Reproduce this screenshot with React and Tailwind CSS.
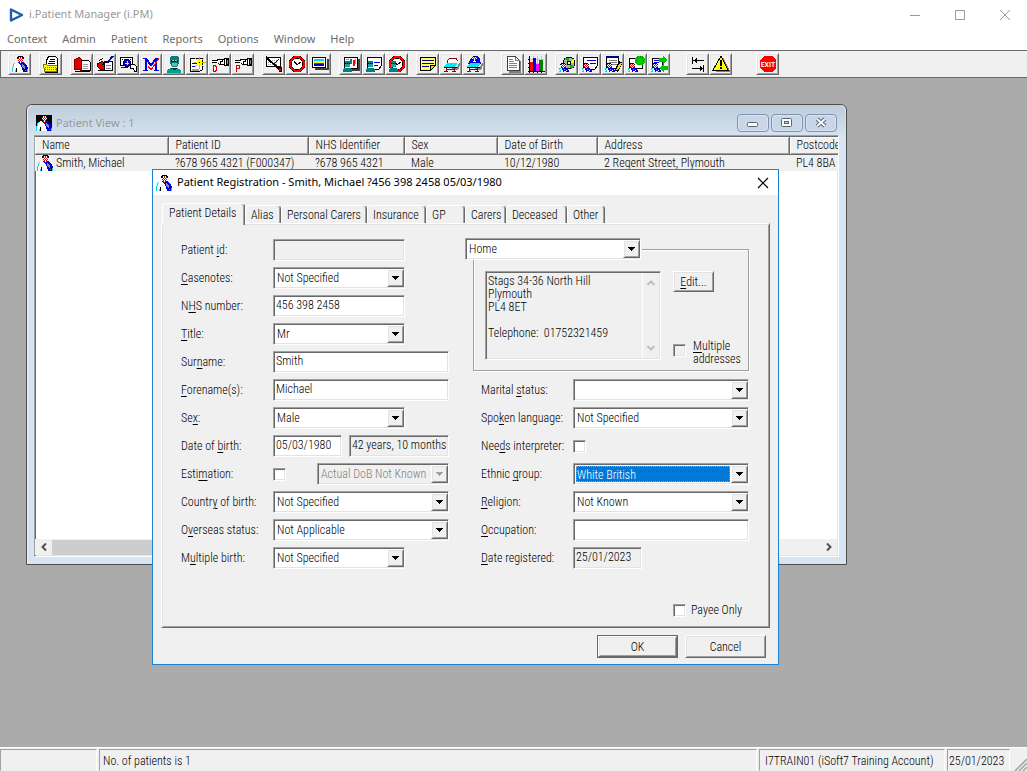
import { useState } from 'react';

const sunken = 'border border-t-[#a0a0a0] border-l-[#a0a0a0] border-r-white border-b-white shadow-[inset_1px_1px_#696969,inset_-1px_-1px_#e3e3e3]';
const raised = 'border border-t-white border-l-white border-r-[#696969] border-b-[#696969] bg-[#f0f0f0] shadow-[inset_1px_1px_#e3e3e3,inset_-1px_-1px_#a0a0a0]';

const PIXEL_COLORS = { k: '#000', r: '#e00000', w: '#fff', b: '#0000e0', c: '#00d8f0', g: '#909090' };

const PATIENT = [
  '......kkkkk.....',
  '.....kkwrwkk....',
  '.....krwrwrk....',
  '......wrwrw.....',
  '......rwrwr.....',
  '.......rwr......',
  '....wwbrwrbb....',
  '..cwwwwbrbbbb...',
  '.cwwwwwwbbgbbb..',
  '.cwwwwwwwbggbbb.',
  '.cwwwwwwwbgggbb.',
  'cwwwwwwwwwbggbbb',
  'cwwwkwwwwwbbgkbb',
  'cwwwkwwwwwbbbkbc',
  'cwwckwwwwwwbkgbc',
  'cwwckwwwwwwbbkbc',
];

const SMALL_PATIENT = [
  '..kkkk.....',
  '.krwrwk....',
  '..wrwrw....',
  '..rwrwr....',
  '..brwbb....',
  'ccwbbbbb...',
  'cwwbbgbbb..',
  'wcwwbbbwbb.',
  'ccwwb..bbb.',
];

const Pixels = ({ rows, x = 0, y = 0 }) => rows.map((row, j) =>
  [...row].map((ch, i) => ch !== '.' && (
    <rect key={`${i}-${j}`} x={x + i} y={y + j} width="1" height="1" fill={PIXEL_COLORS[ch]} />
  )),
);

const PatientIcon = ({ className = '' }) => (
  <svg viewBox="0 0 16 16" shapeRendering="crispEdges" className={`size-4 shrink-0 ${className}`}>
    <Pixels rows={PATIENT} />
  </svg>
);

// little surgeon figure shared by the clinic icons
const Surgeon = () => (
  <>
    <rect x="3" y="6" width="5" height="2" fill="#008080" />
    <rect x="3" y="8" width="5" height="1" fill="#000" />
    <rect x="4" y="8" width="1" height="1" fill="#f00" />
    <rect x="6" y="8" width="1" height="1" fill="#f00" />
    <rect x="3" y="9" width="5" height="3" fill="#20a0a0" />
    <path d="M2 13h7l1 2v2H1v-2z" fill="#008080" />
  </>
);

const Clock = () => (
  <>
    <circle cx="9" cy="9" r="7" fill="#fff" stroke="#000" strokeWidth="3" />
    <circle cx="9" cy="9" r="7" fill="none" stroke="#f00" strokeWidth="2" />
    <path d="M6 6l3 4 4-3" fill="none" stroke="#000" />
    <path d="M9 3v1M9 14v1M3 9h1M14 9h1" stroke="#000" />
  </>
);

const Bed = () => (
  <>
    <path d="M5 12h10l3-5v3l-2 5h-2z" fill="#808080" />
    <path d="M5 8h9l1 1-2 3H2z" fill="#00e8f8" />
    <path d="M2.5 12.5h12M4.5 12v4M12.5 12v4M2 16.5h4M10 16.5h4M4 14.5h9" stroke="#900000" fill="none" />
    <path d="M2 12.5h13" stroke="#000" />
  </>
);

const Hand = ({ letter }) => (
  <>
    <path d="M1 5.5h6M1 7.5h5M6 4.5h7M8 9.5h5M6.5 5v1M7.5 8v1" fill="none" stroke="#000" />
    <path d="M2 6h5v1H2zM7 5h6v4H8z" fill="#fff" />
    <path d="M9 6.5h3M9.5 7v2M11.5 5v1" fill="none" stroke="#000" />
    <path d="M13 3h5v8h-5z" fill="#000" />
    <path d="M14 4h1v6h-1z" fill="#fff" />
    <path d="M16 5h1v4h-1z" fill="#808080" />
    {letter === 'D'
      ? <path d="M2.5 10.5h2l1 2v2l-1 2h-2z" fill="none" stroke="#e00000" />
      : <path d="M2.5 17v-6.5h3v3h-3" fill="none" stroke="#e00000" />}
  </>
);

const ICONS = {
  patient: <Pixels rows={PATIENT} x={1} y={1} />,
  folder: (
    <>
      <path d="M6.5 1.5h7l2 2v8h-11v-6z" fill="#fff" stroke="#000" />
      <path d="M8 4.5h5M7 6.5h6M6 8.5h7" stroke="#000" />
      <path d="M1.5 9.5h3l1 1h10l-1 6h-12z" fill="#ffff00" stroke="#808000" />
      <path d="M3 12.5h11M3 14.5h11" stroke="#908000" strokeDasharray="1 1" />
      <path d="M15.5 10v7h-13" stroke="#000" fill="none" />
    </>
  ),
  book: (
    <>
      <path d="M8.5 5.5h7l2 2v8h-9z" fill="#fff" stroke="#000" />
      <path d="M10 9.5h5M10 11.5h5M10 13.5h5" stroke="#a0a0a0" />
      <path d="M1.5 4.5l5-2 2 2v11l-2-1h-5z" fill="#e00000" stroke="#800000" />
      <path d="M2 16.5h15" stroke="#000" />
    </>
  ),
  bookPen: (
    <>
      <path d="M8.5 6.5h8v9h-8z" fill="#fff" stroke="#000" />
      <path d="M1.5 8.5l5-2 2 2v7l-4-1-3-3z" fill="#e00000" stroke="#000" />
      <path d="M10 10.5h5M10 13.5h5" stroke="#808080" />
      <path d="M17 1l-6 7" stroke="#0000c0" strokeWidth="2" />
      <path d="M12 6l-6 4M3 5.5l4-2M2 15.5h14" stroke="#000" />
    </>
  ),
  search: (
    <>
      <path d="M1.5 2.5h12v8h-12z" fill="#fff" stroke="#000" />
      <path d="M1 4.5h12" stroke="#000" strokeDasharray="1 1" />
      <circle cx="8" cy="8" r="3.5" fill="#0000e0" stroke="#000" />
      <path d="M6 8.5h4M8.5 6v4" stroke="#ffff00" />
      <path d="M11.5 9.5h4l2 2v5h-2l-1-3h-3z" fill="#fff" stroke="#000" />
      <path d="M2 12.5h7" stroke="#0000c0" />
    </>
  ),
  letterM: (
    <>
      <path d="M1 3.5h4M13 3.5h4M1 15.5h5M12 15.5h5" stroke="#0000e0" />
      <path d="M4 3v12M14 4v11M4 4l5 6 5-6" fill="none" stroke="#0000e0" strokeWidth="2" />
      <path d="M6 11l3 4 8-12" fill="none" stroke="#f00" />
    </>
  ),
  surgeon: (
    <>
      <path d="M6 1h6l2 2v5l-2 4H7L5 8V3z" fill="#008080" />
      <rect x="6" y="5" width="7" height="2" fill="#202020" />
      <path d="M7 5.5h2M10 5.5h2" stroke="#e0c0a0" />
      <rect x="7" y="8" width="5" height="3" fill="#60c0b8" />
      <path d="M2 18v-3l4-2h6l4 2v3z" fill="#00a090" />
      <path d="M6 13.5h6M8 14.5h3" stroke="#003838" />
    </>
  ),
  newCard: (
    <>
      <path d="M2.5 3.5h12v11l-3 2h-9z" fill="#fff" stroke="#000" />
      <path d="M4 14h7v2H4z" fill="#a0a0a0" />
      <path d="M4 8.5h5M4 11.5h4" stroke="#0000c0" />
      <path d="M11.5 2v12M6 7.5h12M7 3l9 9M16 3l-9 9" stroke="#c8b800" />
      <circle cx="11.5" cy="7.5" r="3" fill="#ffff00" />
      <path d="M11 7.5h1" stroke="#000" />
    </>
  ),
  handD: <Hand letter="D" />,
  handP: <Hand letter="P" />,
  cardOff: (
    <>
      <path d="M1.5 2.5h14v9h-14z" fill="#fff" stroke="#000" />
      <path d="M3 5.5h10M3 7.5h10M3 9.5h10" stroke="#a0a0a0" strokeDasharray="1 1" />
      <path d="M1 2l13 12" stroke="#000" strokeWidth="2" />
      <path d="M9 9l5-5" stroke="#000" />
      <rect x="14" y="13" width="3" height="3" fill="#c00000" />
      <path d="M13 12.5h3M16.5 12v5M14 16.5h3" stroke="#000" />
    </>
  ),
  clock: <Clock />,
  screen: (
    <>
      <path d="M4 14h13V4" stroke="#404040" strokeWidth="2" fill="none" />
      <path d="M1.5 2.5h13v10h-13z" fill="#fff" stroke="#000" />
      <rect x="3" y="4" width="10" height="2" fill="#00d8f0" />
      <rect x="3" y="6" width="10" height="2" fill="#ffff00" />
      <rect x="3" y="8" width="10" height="1" fill="#f00" />
      <rect x="3" y="9" width="10" height="2" fill="#0000e0" />
    </>
  ),
  clinicChart: (
    <>
      <path d="M5 15h12V4" stroke="#404040" strokeWidth="2" fill="none" />
      <path d="M2.5 2.5h13v11h-13z" fill="#fff" stroke="#000" />
      <rect x="4" y="4" width="3" height="1" fill="#00d8f0" />
      <rect x="8" y="4" width="2" height="5" fill="#008080" />
      <rect x="11" y="5" width="2" height="6" fill="#f00" />
      <rect x="13" y="4" width="1" height="5" fill="#00d8f0" />
      <Surgeon />
    </>
  ),
  clinicCard: (
    <>
      <path d="M2.5 2.5h14v8l-3 4h-11z" fill="#fff" stroke="#000" />
      <path d="M9 7.5h6M9 10.5h4" stroke="#0000e0" />
      <Surgeon />
    </>
  ),
  clinicClock: (
    <>
      <Clock />
      <Surgeon />
    </>
  ),
  note: (
    <>
      <path d="M1.5 2.5h15v8l-5 5h-10z" fill="#ffff60" stroke="#000" />
      <path d="M11.5 15.5v-5h5z" fill="#d8d800" stroke="#000" />
      <path d="M3 5.5h12M3 8.5h12M3 11.5h7" stroke="#000090" />
    </>
  ),
  bed: (
    <>
      <path d="M5.5 8V5.5l2-2h7l1 3" fill="#fff" stroke="#900000" />
      <Bed />
    </>
  ),
  bedPatient: (
    <>
      <path d="M3 9l3-6 2-2h4l3 3 1 5z" fill="#0000e0" />
      <Pixels rows={['.kkk.', 'rwrwr', 'wrwrw', '.rwr.', '..w..', '.www.']} x={7} y={1} />
      <Bed />
    </>
  ),
  document: (
    <>
      <path d="M5 17h11V6" stroke="#808080" strokeWidth="2" fill="none" />
      <path d="M3.5 1.5h8l4 4v10h-12z" fill="#fff" stroke="#404040" />
      <path d="M11.5 2v3.5h4M5 4.5h4M5 6.5h5M5 8.5h8M5 10.5h8M5 12.5h8" stroke="#808080" fill="none" />
    </>
  ),
  chart: (
    <>
      <path d="M6.5 1v15M10.5 1v15M14.5 1v15M2 4.5h15M2 8.5h15" stroke="#c0c0c0" />
      <rect x="3" y="7" width="3" height="9" fill="#f00" />
      <rect x="6" y="3" width="3" height="13" fill="#0000e0" />
      <rect x="9" y="9" width="3" height="7" fill="#f0f" />
      <rect x="12" y="5" width="4" height="11" fill="#008000" />
      <path d="M2.5 1v17M1 16.5h17M1 4.5h1M1 8.5h1M1 12.5h1M6.5 16v2M10.5 16v2M14.5 16v2" stroke="#000" />
    </>
  ),
  patientDisc: (
    <>
      <circle cx="11" cy="8" r="6" fill="#b0b0a0" stroke="#000" />
      <path d="M11 8L7 3h4zM11 8l5 3-3 3z" fill="#00c000" />
      <path d="M11 8l5-4v4z" fill="#ffff00" />
      <circle cx="11" cy="8" r="2" fill="#fff" stroke="#000" />
      <Pixels rows={SMALL_PATIENT} x={1} y={8} />
    </>
  ),
  patientCard: (
    <>
      <path d="M2.5 2.5h14v8l-3 4h-11z" fill="#fff" stroke="#000" />
      <path d="M6 5.5h9M9 8.5h6" stroke="#0000e0" />
      <Pixels rows={SMALL_PATIENT} x={1} y={8} />
    </>
  ),
  patientEdit: (
    <>
      <path d="M2.5 2.5h12v11h-12z" fill="#fff" stroke="#000" />
      <path d="M2 2h13" stroke="#000080" strokeWidth="2" />
      <path d="M5 5.5h8M5 7.5h8M8 9.5h5" stroke="#808080" />
      <Pixels rows={SMALL_PATIENT} x={1} y={8} />
      <path d="M17 7l-5 9" stroke="#000" strokeWidth="4" />
      <path d="M17 8l-4 7" stroke="#ffd000" strokeWidth="2" />
    </>
  ),
  patientGlobe: (
    <>
      <path d="M2.5 3.5h13v10h-13z" fill="#fff" stroke="#000" />
      <circle cx="13" cy="5.5" r="5" fill="#00c800" />
      <circle cx="13" cy="5.5" r="4" fill="none" stroke="#008000" strokeDasharray="1 2" />
      <Pixels rows={SMALL_PATIENT} x={1} y={8} />
    </>
  ),
  patientSwap: (
    <>
      <path d="M2.5 3.5h10v10h-10z" fill="#fff" stroke="#000" />
      <path d="M4 5.5h5M4 7.5h5" stroke="#0000e0" />
      <Pixels rows={SMALL_PATIENT} x={1} y={8} />
      <path d="M9 3h4V1l5 4-5 4V7H9z" fill="#00c800" />
      <path d="M18 11h-4V9l-5 4 5 4v-2h4z" fill="#00c800" />
    </>
  ),
  tabs: (
    <path d="M3.5 2v7M4 5.5h11M7.5 3v5M6.5 4v3M5.5 5v1M14.5 10v7M3 13.5h11M11.5 11v5M12.5 12v3M13.5 13v1" fill="none" stroke="#000" />
  ),
  warning: (
    <>
      <path d="M11 2l7 14-1 1H4z" fill="#808080" />
      <path d="M9 1l7 14H1z" fill="#ffff00" stroke="#000" />
      <rect x="8" y="5" width="2" height="6" fill="#000" />
      <rect x="8" y="12" width="2" height="2" fill="#000" />
    </>
  ),
  exit: (
    <>
      <path d="M6 1h7l4 4v8l-4 4H6l-5-4V5z" fill="#f00" />
      <text x="9" y="12" textAnchor="middle" fontSize="8" fontWeight="500" fill="#fff" fontFamily="Roboto Condensed, sans-serif">EXIT</text>
    </>
  ),
};

const TOOL_GROUPS = [
  { space: '', tools: ['patient'] },
  { space: 'ml-2', tools: ['folder'] },
  { space: 'ml-2', tools: ['book', 'bookPen', 'search', 'letterM', 'surgeon', 'newCard', 'handD', 'handP'] },
  { space: 'ml-2', tools: ['cardOff', 'clock', 'screen'] },
  { space: 'ml-2', tools: ['clinicChart', 'clinicCard', 'clinicClock'] },
  { space: 'ml-2', tools: ['note', 'bed', 'bedPatient'] },
  { space: 'ml-4', tools: ['document', 'chart'] },
  { space: 'ml-2', tools: ['patientDisc', 'patientCard', 'patientEdit', 'patientGlobe', 'patientSwap'] },
  { space: 'ml-4', tools: ['tabs', 'warning'] },
  { space: 'ml-6', tools: ['exit'] },
];

const Toolbar = () => (
  <div className="flex h-7 shrink-0 items-center overflow-hidden border-y border-l border-[#696969] bg-[#f0f0f0] pl-[7px]">
    {TOOL_GROUPS.map((group, i) => (
      <div key={i} className={`flex shrink-0 ${group.space}`}>
        {group.tools.map((name) => (
          <button key={name} type="button" aria-label={name} className={`flex h-[22px] w-[23px] items-center justify-center ${raised}`}>
            <svg viewBox="0 0 18 18" shapeRendering="crispEdges" className="size-[18px] shrink-0">{ICONS[name]}</svg>
          </button>
        ))}
      </div>
    ))}
  </div>
);

const TitleBar = () => (
  <header className="flex h-[29px] shrink-0 items-center bg-white pl-2 font-['Noto_Sans',sans-serif] text-[11px] font-normal text-[#999]">
    <svg viewBox="0 0 16 16" className="size-4">
      <path d="M3 2.5L14 8 3 13.5z" fill="#fff" stroke="#1d5fa6" strokeWidth="2.4" strokeLinejoin="round" />
    </svg>
    <h1 className="ml-[5px] flex-1">i.Patient Manager (i.PM)</h1>
    {[['Minimize', 'M1 6.5h10'], ['Maximize', 'M1.5 1.5h9v9h-9z'], ['Close', 'M1 1l10 10M11 1L1 11']].map(([label, d]) => (
      <button key={label} type="button" aria-label={label} className="flex h-full w-[45px] items-center justify-center">
        <svg viewBox="0 0 12 12" className="size-3"><path d={d} fill="none" stroke="#999" /></svg>
      </button>
    ))}
  </header>
);

const MenuBar = () => (
  <nav className="flex h-[21px] shrink-0 items-center gap-[15px] bg-white pl-[7px] font-['Noto_Sans',sans-serif] text-[11px] font-normal text-[#6d6d6d]">
    {['Context', 'Admin', 'Patient', 'Reports', 'Options', 'Window', 'Help'].map((m) => (
      <button key={m} type="button">{m}</button>
    ))}
  </nav>
);

const COLUMNS = [
  { title: 'Name', width: 'w-[133px]' },
  { title: 'Patient ID', width: 'w-[140px]', value: '?678 965 4321 (F000347)' },
  { title: 'NHS Identifier', width: 'w-[96px]', value: '?678 965 4321' },
  { title: 'Sex', width: 'w-[93px]', value: 'Male' },
  { title: 'Date of Birth', width: 'w-[100px]', value: '10/12/1980' },
  { title: 'Address', width: 'w-[192px]', value: '2 Regent Street, Plymouth' },
  { title: 'Postcode', width: 'w-[80px]', value: 'PL4 8BA' },
];

const childButton = 'flex h-[18px] w-8 items-center justify-center rounded-sm border border-[#8093b0] bg-[#c8d6e8] shadow-[inset_0_0_0_1px_#d8e4f2]';

const PatientView = () => (
  <section className="absolute left-[26px] top-[26px] flex h-[461px] w-[821px] flex-col rounded-t-md border border-[#4d4d4d] bg-[#d7e4f2] px-[7px] pb-[7px] shadow-[inset_1px_1px_#e8f0f8]">
    <div className="-mx-[6px] flex h-[30px] shrink-0 items-center rounded-t-md bg-linear-to-b from-[#bfcddb] to-[#d4e1ef] px-2 pt-1.5 font-['Noto_Sans',sans-serif] text-[11px] font-normal text-[#999]">
      <span className="bg-black"><PatientIcon /></span>
      <h2 className="ml-1 flex-1">Patient View : 1</h2>
      <div className="flex gap-[2px]">
        <button type="button" aria-label="Minimize" className={childButton}>
          <svg viewBox="0 0 12 12" className="size-3"><rect x="0.5" y="5.5" width="10" height="4" rx="1" fill="#fff" stroke="#5a6270" /></svg>
        </button>
        <button type="button" aria-label="Maximize" className={childButton}>
          <svg viewBox="0 0 12 12" className="size-3">
            <rect x="0.5" y="1.5" width="10" height="8" rx="1" fill="#fff" stroke="#5a6270" />
            <rect x="3.5" y="4.5" width="4" height="2" fill="#c8d6e8" stroke="#5a6270" />
          </svg>
        </button>
        <button type="button" aria-label="Close" className={childButton}>
          <svg viewBox="0 0 12 12" className="size-3">
            <path d="M2 2l8 7M10 2L2 9" stroke="#5a6270" strokeWidth="4" />
            <path d="M2 2l8 7M10 2L2 9" stroke="#fff" strokeWidth="2" />
          </svg>
        </button>
      </div>
    </div>
    <div className={`flex flex-1 flex-col overflow-hidden bg-white py-px pr-px ${sunken}`}>
      <table className="w-[834px] table-fixed border-collapse text-left leading-4">
        <thead>
          <tr>
            {COLUMNS.map((c) => (
              <th key={c.title} className={`h-[17px] border-b border-r border-[#696969] bg-[#f0f0f0] pl-[7px] font-light shadow-[inset_1px_1px_#fff,inset_-1px_-1px_#a0a0a0] ${c.width}`}>{c.title}</th>
            ))}
          </tr>
        </thead>
        <tbody>
          <tr className="bg-[#f0f0f0]">
            {COLUMNS.map((c) => (
              <td key={c.title} className="h-[17px] whitespace-nowrap pl-[7px] first:pl-0.5">
                {c.value ?? <span className="flex items-center gap-[3px]"><PatientIcon />Smith, Michael</span>}
              </td>
            ))}
          </tr>
        </tbody>
      </table>
      <div className="flex-1" />
      <div className="flex h-4 shrink-0 items-center bg-[#f0f0f0]">
        <button type="button" aria-label="Scroll left" className="flex w-[17px] justify-center">
          <svg viewBox="0 0 8 8" className="size-2"><path d="M6 0.5L2.5 4 6 7.5" fill="none" stroke="#505050" strokeWidth="2" /></svg>
        </button>
        <div className="mr-16 h-[15px] flex-1 bg-[#cdcdcd]" />
        <button type="button" aria-label="Scroll right" className="flex w-[17px] justify-center">
          <svg viewBox="0 0 8 8" className="size-2"><path d="M2 0.5L5.5 4 2 7.5" fill="none" stroke="#505050" strokeWidth="2" /></svg>
        </button>
      </div>
    </div>
  </section>
);

// label text with the accelerator letter between two underscores
const Accel = ({ text }) => {
  const [before, key, after] = text.split('_');
  return <>{before}<u className="underline underline-offset-2">{key}</u>{after}</>;
};

const Row = ({ id, label, children }) => (
  <div className="flex h-7 items-center">
    <label htmlFor={id} className="w-[92px] shrink-0 whitespace-nowrap"><Accel text={label} /></label>
    {children}
  </div>
);

const TextBox = ({ id, value = '', readOnly = false, className = 'w-44', label }) => (
  <input id={id} type="text" defaultValue={value} readOnly={readOnly} aria-label={label}
    className={`h-[22px] pb-[3px] pl-[2px] outline-none ${readOnly ? 'bg-[#f0f0f0]' : 'bg-white'} ${sunken} ${className}`} />
);

const Combo = ({ id, value = '', className = 'w-44', disabled = false, focused = false, label }) => (
  <div className={`flex h-[22px] py-px pl-px ${disabled ? 'bg-[#f0f0f0]' : 'bg-white'} ${sunken} ${className}`}>
    <select id={id} defaultValue={value} disabled={disabled} aria-label={label}
      className={`min-w-0 flex-1 appearance-none rounded-none leading-4 outline-none ${focused ? 'm-px border border-dotted border-[#ff8728] bg-[#0078d7] text-white' : 'pl-0.5'} ${disabled ? 'text-[#808080]' : ''}`}>
      <option value={value}>{value}</option>
    </select>
    <span className={`pointer-events-none flex w-[17px] shrink-0 items-center justify-center ${raised}`}>
      <svg viewBox="0 0 7 4" shapeRendering="crispEdges" className="h-1 w-[7px]">
        <path d="M0 0h7L3.5 4z" fill={disabled ? '#a0a0a0' : '#000'} />
      </svg>
    </span>
  </div>
);

const CheckBox = ({ id, grey = false }) => (
  <input id={id} type="checkbox" className={`size-[13px] shrink-0 appearance-none ${grey ? 'bg-[#f0f0f0]' : 'bg-white'} ${sunken}`} />
);

const TABS = [
  { name: 'Patient Details', width: 'w-[83px]' },
  { name: 'Alias', width: 'w-9' },
  { name: 'Personal Carers', width: 'w-[86px]' },
  { name: 'Insurance', width: 'w-[59px]' },
  { name: 'GP', width: 'w-[39px]' },
  { name: 'Carers', width: 'w-[41px]' },
  { name: 'Deceased', width: 'w-[61px]' },
  { name: 'Other', width: 'w-[38px]' },
];

const TabStrip = () => {
  const [active, setActive] = useState('Patient Details');
  return (
    <div role="tablist" className="flex items-end pl-px">
      {TABS.map(({ name, width }) => {
        const on = name === active;
        return (
          <button key={name} type="button" role="tab" aria-selected={on} onClick={() => setActive(name)}
            className={`whitespace-nowrap rounded-t-sm border border-b-0 border-l-white border-r-[#696969] border-t-white bg-[#f0f0f0] text-left shadow-[inset_-1px_0_#a0a0a0] ${on ? 'relative -mb-0.5 h-[22px] pb-1 pl-1.5' : 'h-[18px] pl-[5px]'} ${width}`}>
            {name}
          </button>
        );
      })}
    </div>
  );
};

const LeftColumn = () => (
  <div className="w-[268px]">
    <Row id="pid" label="Patient _i_d:"><TextBox id="pid" readOnly className="w-[132px]" /></Row>
    <Row id="casenotes" label="_C_asenotes:"><Combo id="casenotes" value="Not Specified" className="w-[132px]" /></Row>
    <Row id="nhs" label="N_H_S number:"><TextBox id="nhs" value="456 398 2458" className="w-[132px]" /></Row>
    <Row id="title" label="_T_itle:"><Combo id="title" value="Mr" className="w-[132px]" /></Row>
    <Row id="surname" label="Sur_n_ame:"><TextBox id="surname" value="Smith" /></Row>
    <Row id="forename" label="_F_orename(s):"><TextBox id="forename" value="Michael" /></Row>
    <Row id="sex" label="Se_x_:"><Combo id="sex" value="Male" className="w-[132px]" /></Row>
    <Row id="dob" label="Date of _b_irth:">
      <TextBox id="dob" value="05/03/1980" className="w-[69px]" />
      <TextBox value="42 years, 10 months" readOnly label="Age" className="ml-auto w-[100px]" />
    </Row>
    <Row id="estimation" label="Esti_m_ation:">
      <CheckBox id="estimation" />
      <Combo value="Actual DoB Not Known" disabled label="Estimation reason" className="ml-auto w-[132px]" />
    </Row>
    <Row id="country" label="Countr_y_ of birth:"><Combo id="country" value="Not Specified" /></Row>
    <Row id="overseas" label="O_v_erseas status:"><Combo id="overseas" value="Not Applicable" /></Row>
    <Row id="multiple" label="M_u_ltiple birth:"><Combo id="multiple" value="Not Specified" className="w-[132px]" /></Row>
  </div>
);

const AddressBox = () => (
  <fieldset className="mb-[5px] mt-[2px] h-[133px] border border-[#a0a0a0] pl-[11px] shadow-[1px_1px_#fff,inset_1px_1px_#fff]">
    <legend className="-ml-5 bg-[#f0f0f0] pr-px"><Combo value="Home" label="Address type" /></legend>
    <div className="flex pt-[11px]">
      <div className={`flex h-[89px] w-44 shrink-0 p-px ${sunken}`}>
        <textarea readOnly aria-label="Address" className="min-w-0 flex-1 resize-none overflow-hidden pl-px pt-0.5 leading-[13px] outline-none"
          defaultValue={'Stags 34-36 North Hill\nPlymouth\nPL4 8ET\n\nTelephone:  01752321459'} />
        <div className="flex w-[17px] flex-col items-center justify-between border-l border-white py-1.5">
          <svg viewBox="0 0 8 8" className="size-2"><path d="M0.5 6L4 2.5 7.5 6" fill="none" stroke="#bfbfbf" strokeWidth="2" /></svg>
          <svg viewBox="0 0 8 8" className="size-2"><path d="M0.5 2L4 5.5 7.5 2" fill="none" stroke="#bfbfbf" strokeWidth="2" /></svg>
        </div>
      </div>
      <div className="ml-3 flex flex-col justify-between">
        <button type="button" className={`h-[21px] w-[41px] ${raised}`}><Accel text="_E_dit..." /></button>
        <div className="-mb-1.5 flex gap-[7px]">
          <span className="flex pt-1"><CheckBox id="multi" grey /></span>
          <label htmlFor="multi" className="leading-[13px]"><Accel text="_M_ultiple" /><br />addresses</label>
        </div>
      </div>
    </div>
  </fieldset>
);

const RightColumn = () => (
  <div className="w-[276px]">
    <AddressBox />
    <div className="pl-2">
      <Row id="marital" label="Marital _s_tatus:"><Combo id="marital" /></Row>
      <Row id="language" label="Spo_k_en language:"><Combo id="language" value="Not Specified" /></Row>
      <Row id="interpreter" label="Nee_d_s interpreter:"><CheckBox id="interpreter" /></Row>
      <Row id="ethnic" label="Ethnic _g_roup:"><Combo id="ethnic" value="White British" focused /></Row>
      <Row id="religion" label="_R_eligion:"><Combo id="religion" value="Not Known" /></Row>
      <Row id="occupation" label="_O_ccupation:"><TextBox id="occupation" /></Row>
      <Row id="registered" label="_D_ate registered:"><TextBox id="registered" value="25/01/2023" readOnly className="w-[69px]" /></Row>
    </div>
    <div className="mt-6 flex h-7 items-center justify-end gap-[5px] pr-[7px]">
      <CheckBox id="payee" />
      <label htmlFor="payee">Payee Only</label>
    </div>
  </div>
);

const RegistrationDialog = () => (
  <section role="dialog" aria-label="Patient Registration" className="absolute left-[152px] top-[91px] w-[627px] border border-[#1883d7] bg-[#f0f0f0] pb-[6px]">
    <div className="flex h-[25px] items-center bg-white pl-[3px] pr-[9px] font-['Noto_Sans',sans-serif] text-[11px] font-normal">
      <PatientIcon />
      <h2 className="ml-[5px] flex-1">Patient Registration - Smith, Michael ?456 398 2458 05/03/1980</h2>
      <button type="button" aria-label="Close">
        <svg viewBox="0 0 12 12" className="size-3"><path d="M1 1l10 10M11 1L1 11" stroke="#000" strokeWidth="1.2" /></svg>
      </button>
    </div>
    <div className="px-2 pt-2">
      <TabStrip />
      <div className={`flex justify-between pb-[3px] pl-[19px] pr-5 pt-[12px] ${raised}`}>
        <LeftColumn />
        <RightColumn />
      </div>
      <div className="flex justify-end gap-[7px] pr-1 pt-[7px]">
        <div className="border border-[#696969]">
          <button type="button" className={`block h-[21px] w-[79px] ${raised}`}>OK</button>
        </div>
        <button type="button" className={`h-[23px] w-[81px] ${raised}`}>Cancel</button>
      </div>
    </div>
  </section>
);

const pane = 'flex items-center border border-t-[#a0a0a0] border-l-[#a0a0a0] border-r-white border-b-transparent';

const StatusBar = () => (
  <footer className="flex h-6 shrink-0 gap-[2px] border-t border-white bg-[#f0f0f0] pt-px">
    <div className={`w-[97px] ${pane}`} />
    <div className={`flex-1 pl-[3px] pt-px ${pane}`}>No. of patients is 1</div>
    <div className={`w-[186px] pl-[5px] pt-px ${pane}`}>I7TRAIN01 (iSoft7 Training Account)</div>
    <div className={`w-[63px] pl-px pt-px ${pane}`}>25/01/2023</div>
    <svg viewBox="0 0 15 22" className="h-[22px] w-[15px] self-end">
      <path d="M3 22L15 10M7 22l8-8M11 22l4-4" stroke="#a0a0a0" strokeWidth="1.5" />
    </svg>
  </footer>
);

export default function App() {
  return (
    <div className="flex h-screen flex-col overflow-hidden bg-white font-['Roboto_Condensed',sans-serif] text-xs font-light text-black">
      <TitleBar />
      <MenuBar />
      <Toolbar />
      <main className="relative flex-1 overflow-hidden bg-[#ababab]">
        <PatientView />
        <RegistrationDialog />
      </main>
      <StatusBar />
    </div>
  );
}
